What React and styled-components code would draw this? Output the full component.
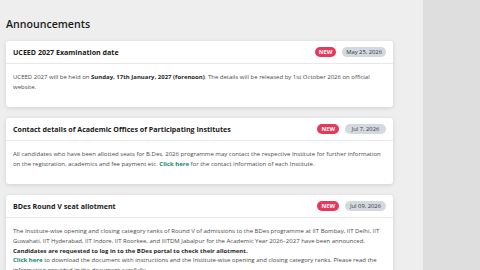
import React from "react";
import styled, { createGlobalStyle } from "styled-components";

const Global = createGlobalStyle`
  html, body { margin: 0; padding: 0; background: #dedede; }
  body { font-family: "Open Sans", "Noto Sans", sans-serif; }
  * { box-sizing: border-box; }
`;

const Page = styled.div`
  display: flex;
  width: 480px;
  height: 270px;
  overflow: hidden;
`;

const Main = styled.main`
  width: 423px;
  flex: none;
  background: #eeeeee;
  padding: 16px 30px 0 6px;
  display: flex;
  flex-direction: column;
`;

const Side = styled.aside`
  flex: 1;
  background: #dedede;
`;

const Heading = styled.h1`
  margin: 0 0 9px;
  font-size: 10.6px;
  line-height: 16px;
  font-weight: 600;
  color: #1b1b1b;
`;

const List = styled.div`
  display: flex;
  flex-direction: column;
  gap: 11px;
`;

const Card = styled.section`
  background: #ffffff;
  border-radius: 3px;
  box-shadow: 0 1px 4px rgba(0, 0, 0, 0.13);
  flex: none;
`;

const CardHeader = styled.header`
  height: 23px;
  padding: 0 7px;
  display: flex;
  align-items: center;
  justify-content: space-between;
  border-bottom: 1px solid #e8e8e8;
`;

const Title = styled.h2`
  margin: 0;
  font-size: 7.1px;
  font-weight: 700;
  color: #1a1a1a;
`;

const Badges = styled.div`
  display: flex;
  align-items: center;
  gap: 6px;
`;

const Pill = styled.span`
  display: inline-flex;
  align-items: center;
  justify-content: center;
  height: 10px;
  padding: 0 4px;
  border-radius: 5px;
  font-size: 5.8px;
  background: ${(p) => (p.$new ? "#e5385b" : "#d4d9df")};
  color: ${(p) => (p.$new ? "#ffffff" : "#33373c")};
  font-weight: ${(p) => (p.$new ? 700 : 400)};
  min-width: ${(p) => (p.$new ? "19px" : "41px")};
`;

const Body = styled.div`
  padding: 9px 7px 15px;
  font-size: 6px;
  line-height: 9.6px;
  color: #4a4a4a;
`;

const P = styled.p`
  margin: 0;
`;

const Strong = styled.strong`
  font-weight: 700;
  color: #1f1f1f;
`;

const Link = styled.a`
  color: #0b8a68;
  font-weight: 700;
  text-decoration: none;
`;

const items = [
  {
    title: "UCEED 2027 Examination date",
    date: "May 25, 2026",
    body: (
      <P>
        UCEED 2027 will be held on <Strong>Sunday, 17th January, 2027 (forenoon)</Strong>. The details will be
        released by 1st October 2026 on official website.
      </P>
    ),
  },
  {
    title: "Contact details of Academic Offices of Participating Institutes",
    date: "Jul 7, 2026",
    body: (
      <P>
        All candidates who have been allotted seats for B.Des. 2026 programme may contact the respective Institute
        for further information on the registration, academics and fee payment etc. <Link href="#">Click here</Link>{" "}
        for the contact information of each Institute.
      </P>
    ),
  },
  {
    title: "BDes Round V seat allotment",
    date: "Jul 09, 2026",
    body: (
      <>
        <P>
          The Institute-wise opening and closing category ranks of Round V of admissions to the BDes programme at IIT
          Bombay, IIT Delhi, IIT Guwahati, IIT Hyderabad, IIT Indore, IIT Roorkee, and IIITDM Jabalpur for the
          Academic Year 2026–2027 have been announced.
        </P>
        <P>
          <Strong>Candidates are requested to log in to the BDes portal to check their allotment.</Strong>
        </P>
        <P>
          <Link href="#">Click here</Link> to download the document with instructions and the Institute-wise opening
          and closing category ranks. Please read the information provided in the document carefully.
        </P>
      </>
    ),
  },
];

export default function App() {
  return (
    <>
      <Global />
      <Page>
        <Main>
          <Heading>Announcements</Heading>
          <List>
            {items.map((it) => (
              <Card key={it.title}>
                <CardHeader>
                  <Title>{it.title}</Title>
                  <Badges>
                    <Pill $new>NEW</Pill>
                    <Pill>{it.date}</Pill>
                  </Badges>
                </CardHeader>
                <Body>{it.body}</Body>
              </Card>
            ))}
          </List>
        </Main>
        <Side />
      </Page>
    </>
  );
}
